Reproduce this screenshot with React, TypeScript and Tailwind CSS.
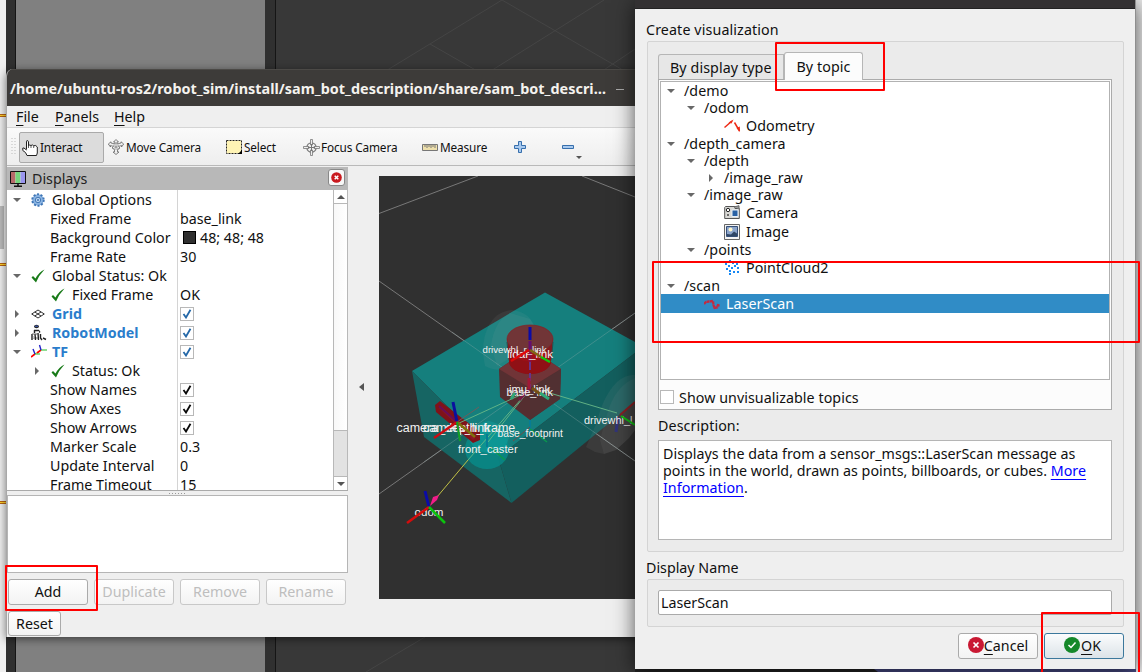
import React from "react";

const Tri = ({ open = true }: { open?: boolean }) => (
  <svg className="h-[8px] w-[8px] shrink-0" viewBox="0 0 8 8">
    <path d={open ? "M0 2H8L4 6Z" : "M2 0V8L6 4Z"} fill="#686868" />
  </svg>
);

const Check = () => (
  <svg className="h-[14px] w-[14px] shrink-0" viewBox="0 0 14 14">
    <path d="M.5 8.500 2 7 4.500 9.500Q8 3 13.500.5 8 6 5 13.500Z" fill="#187a18" />
  </svg>
);

const Box = ({ blue = false }: { blue?: boolean }) => (
  <span className="flex h-[14px] w-[14px] items-center justify-center border border-[#b8b8b8] bg-white">
    <svg className="h-[10px] w-[10px]" viewBox="0 0 10 10">
      <path d="M1.500 5 4 8.500 8.500.8" fill="none" stroke={blue ? "#2468a8" : "#080808"} strokeWidth="1.800" />
    </svg>
  </span>
);

const Gear = () => (
  <svg className="h-[14px] w-[14px]" viewBox="0 0 14 14">
    <circle cx="7" cy="7" r="5.700" fill="#7ba9dc" stroke="#3e75b5" strokeWidth="2" strokeDasharray="2 1.600" />
    <circle cx="7" cy="7" r="4.600" fill="#8cb5e3" />
    <circle cx="7" cy="7" r="2.700" fill="#b7d2ee" stroke="#4379b7" />
    <circle cx="7" cy="7" r="1" fill="#3c71b0" />
  </svg>
);

const GridIcon = () => (
  <svg className="h-[10px] w-[14px]" viewBox="0 0 14 10">
    <path d="M.7 5 7 1 13.300 5 7 9ZM3.800 3 10 7M10 3 3.800 7" fill="none" stroke="#333" strokeWidth="1" />
  </svg>
);

const Robot = () => (
  <svg className="h-[17px] w-[16px]" viewBox="0 0 16 17">
    <ellipse cx="5.500" cy="2.500" rx="2.500" ry="1.800" fill="#222" />
    <path d="M4 2.200H7" stroke="#4668d0" />
    <path d="M3 6.500H7.500L9 8.500M3.500 6V9M1 10V16M4 10 4.500 16M7 9 7.500 16M9.500 10V14L11 16M12 14 15 15.500" fill="none" stroke="#222" strokeWidth="1.400" />
    <path d="M1 10H7M2 14H4M6 13V15" stroke="#666" />
    <path d="M6 7.500H8M2.500 12V14" stroke="#ccc" />
  </svg>
);

const TfIcon = () => (
  <svg className="h-[15px] w-[16px]" viewBox="0 0 16 15">
    <path d="M4 10 10 6" stroke="#dfd21c" />
    <path d="M4 10 0 13M10 6 6 9" stroke="#f00" strokeWidth="1.600" />
    <path d="M4 10H9M10 6H16" stroke="#22bb22" strokeWidth="1.200" />
    <path d="M4 10 2 5M10 6 8.500 1" stroke="#2222c9" strokeWidth="1.400" />
  </svg>
);

const Monitor = () => (
  <svg className="h-[16px] w-[16px]" viewBox="0 0 16 16">
    <path d="M.5.500H15.500V12.500H.5Z" fill="#fff" stroke="#111" />
    <path d="M1 1H5.500V12H1Z" fill="#b66a6a" />
    <path d="M5.500 1H10.500V12H5.500Z" fill="#75d57c" />
    <path d="M10.500 1H15V12H10.500Z" fill="#9a95ee" />
    <path d="M8 12V15M4 15.300H12" stroke="#111" strokeWidth="1.500" />
  </svg>
);

const Hand = () => (
  <svg className="h-[16px] w-[16px]" viewBox="0 0 16 16">
    <path d="M4.500 9.500V1.800Q4.500.5 5.300.5T6.500 1.800V6Q7.500 4.300 9 5.500 10.500 4.300 11.700 5.700 14 4.800 15.300 7V13L14.500 15.500H5L3.500 12.500.8 10.500V8H2L4.500 10" fill="#fff" stroke="#222" />
    <path d="M6.500 5V8M9 5.500V8M11.700 6V8" stroke="#333" strokeWidth=".8" />
  </svg>
);

const MoveIcon = () => (
  <svg className="h-[16px] w-[16px]" viewBox="0 0 16 16">
    <path d="M8 .5 10.500 3H9V5L13 4V2.800L15.700 5 13.500 8V6.500L10.500 7.500 12 9 10 10.500H9.500V13H11L8 15.500 5 13H6.500V10.500L4 9 5.500 7.500 2.500 6.500V8L.3 5 3 2.800V4L7 5V3H5.500Z" fill="#eee" stroke="#666" strokeWidth=".8" />
    <path d="M5 6 11 10M11 6 5 10M8 4V11" stroke="#888" strokeWidth=".7" />
  </svg>
);

const FocusIcon = () => (
  <svg className="h-[17px] w-[17px]" viewBox="0 0 17 17" fill="none" stroke="#777">
    <circle cx="8.500" cy="8.500" r="4.600" strokeWidth="1.300" />
    <path d="M7.500.5H9.500V6H7.500ZM7.500 11H9.500V16.500H7.500ZM.5 7.500H6V9.500H.5ZM11 7.500H16.500V9.500H11Z" fill="#eee" strokeWidth=".8" />
    <path d="M8.500 5V12M5 8.500H12" />
  </svg>
);

const tool = "flex shrink-0 items-center text-[11.800px] tracking-[-0.130px] pt-px";

const menuItems = [["File", "w-[39px]"], ["Panels", "w-[59px]"], ["Help", "w-[60px]"]];

type Row = { label: string; kind?: string; value?: string; open?: boolean; box?: string; strong?: boolean };
const rows: Row[] = [
  { label: "Global Options", kind: "gear", open: true },
  { label: "Fixed Frame", value: "base_link" },
  { label: "Background Color", value: "48; 48; 48", box: "swatch" },
  { label: "Frame Rate", value: "30" },
  { label: "Global Status: Ok", kind: "check", open: true },
  { label: "Fixed Frame", kind: "subcheck", value: "OK" },
  { label: "Grid", kind: "grid", open: false, box: "blue", strong: true },
  { label: "RobotModel", kind: "robot", open: false, box: "blue", strong: true },
  { label: "TF", kind: "tf", open: true, box: "blue", strong: true },
  { label: "Status: Ok", kind: "subcheck", open: false },
  { label: "Show Names", box: "black" },
  { label: "Show Axes", box: "black" },
  { label: "Show Arrows", box: "black" },
  { label: "Marker Scale", value: "0.3" },
  { label: "Update Interval", value: "0" },
  { label: "Frame Timeout", value: "15" },
];

function PropertyRow({ row }: { row: Row }) {
  const sub = row.kind === "subcheck";
  return (
    <div className="flex h-[19px] shrink-0">
      <div className="flex w-[171px] items-center border-r border-[#d4d4d4] whitespace-nowrap">
        {!row.kind ? (
          <span className="ml-[43px]">{row.label}</span>
        ) : (
          <>
            <span className={sub ? "flex w-[44px] pl-[26px]" : "flex w-[24px] pl-[6px]"}>
              {row.open !== undefined && <Tri open={row.open} />}
            </span>
            <span className="flex w-[21px] items-center">
              {row.kind === "gear" && <Gear />}
              {(row.kind === "check" || sub) && <Check />}
              {row.kind === "grid" && <GridIcon />}
              {row.kind === "robot" && <Robot />}
              {row.kind === "tf" && <TfIcon />}
            </span>
            <span className={row.strong ? "font-bold text-[#2a7dcc]" : ""}>{row.label}</span>
          </>
        )}
      </div>
      <div className="flex items-center pl-[2px]">
        {row.box === "swatch" && <span className="mr-[4px] ml-[3px] h-[13px] w-[13px] border border-black bg-[#303030]" />}
        {row.box === "blue" && <Box blue />}
        {row.box === "black" && <Box />}
        {row.value}
      </div>
    </div>
  );
}

const Scene = () => (
  <svg className="h-[423px] w-[256px] shrink-0 bg-[#303030]" viewBox="379 176 256 423">
    <path d="M379 213.500 478 176M582 176 635 197M379 281 635 461M379 494 635 313" stroke="#808080" strokeWidth=".9" />
    <path d="M545 292.500 412 371 498 457 635 353V342Z" fill="#157f7d" />
    <path d="M412 371 424 437 511.500 503 498 457Z" fill="#166563" />
    <path d="M498 457 635 353V402L511.500 503Z" fill="#135f5e" />
    <path d="M485 366Q480 345 488 327 496 311 512 310 530 312 535 328L528 362Q500 375 485 366Z" fill="#b0b0b0" opacity=".08" />
    <path d="M491 345Q495 320 510 313L530 319 538 332 520 352 497 366Z" fill="#b0b0b0" opacity=".08" />
    <path d="M635 375Q626 374 617 382 603 396 597 422L586 447 595 452 604 454 616 450 629 438 635 430Z" fill="#9a9a9a" opacity=".1" />
    <path d="M635 378Q616 386 608 411L600 440 604 454 616 450 629 438 635 430Z" fill="#9a9a9a" opacity=".09" />
    <path d="M452 332 635 461M424 462 635 313" stroke="#9bb1b0" strokeWidth=".7" opacity=".45" />
    <ellipse cx="487" cy="449" rx="22" ry="20" fill="#088c8a" opacity=".8" />
    <path d="M468 438Q474 423 489 421 504 424 509 438L505 448 495 454 476 451Z" fill="#12aaa8" opacity=".4" />
    <path d="M499 369 530 348 561 369 560 399 530 420 500 397Z" fill="#552e30" />
    <path d="M499 369 530 388 561 369 530 348Z" fill="#713437" />
    <path d="M530 388V420L560 399 561 369Z" fill="#513032" />
    <path d="M507 339 509 361A21 13 0 0 0 551 361L553 339Z" fill="#801a1e" />
    <ellipse cx="530" cy="360" rx="21" ry="13" fill="#a01016" />
    <path d="M508 352 509 361A21 13 0 0 0 551 361L552 352Q544 361 530 361T508 352Z" fill="#901015" />
    <ellipse cx="530" cy="339" rx="23" ry="14" fill="#713537" stroke="#861f24" strokeWidth=".7" />
    <path d="M507 342 508 353M553 342 552 353" stroke="#2c4b4b" />
    <path d="M435 405 440 401 480 432 480 440 473 443 436 412Z" fill="#801219" />
    <path d="M440 407 474 439" stroke="#8b1726" strokeWidth="3" />
    <path d="M439 406 456 421" stroke="#670c58" strokeWidth="2" />
    <path d="M529 391 457 424M529 390 468 460M530 389 488 442M543 391 617 413" stroke="#69b988" strokeWidth=".9" fill="none" />
    <path d="M468 460 437 497" stroke="#c0c045" />
    <path d="M530 362V389" stroke="#65338a" strokeWidth="2" strokeDasharray="8 3" />
    <path d="M530 350V362" stroke="#8a0f45" strokeWidth="3" />
    <path d="M530 388 519 400" stroke="#751844" strokeWidth="3" />
    <path d="M529 378V389" stroke="#a11837" strokeWidth="3" />
    <path d="M530 420V432M487 447V434" stroke="#087c94" strokeWidth="2" />
    <path d="M530 427 513 441" stroke="#6e4c49" />
    <path d="M530 429 547 442M490 447 505 460" stroke="#0a984d" strokeWidth="1.500" />
    <path d="M457 422 479 407" stroke="#6c5e5c" />
    <path d="M618 417 616 432" stroke="#31347b" strokeWidth="3" />
    <g fill="#f2f2f2" fontFamily="Liberation Sans, sans-serif" fontSize="11">
      <text x="482.500" y="352.500" fontSize="9.700">drivewhl_r_link</text>
      <text x="507" y="358" fontSize="11.700">lidar_link</text>
      <text x="509" y="393" fontSize="11.200">imu_link</text>
      <text x="506.500" y="396">base_link</text>
      <text x="396.500" y="431.500" fontSize="12.500">camera_depth_frame</text>
      <text x="423" y="431.500" fontSize="12.500">camera_link</text>
      <text x="497.500" y="437" fontSize="10.300">base_footprint</text>
      <text x="458" y="453" fontSize="11.300">front_caster</text>
      <text x="414.500" y="515.500" fontSize="11.600">odom</text>
      <text x="584" y="423.500" fontSize="10.900">drivewhl_l</text>
    </g>
    <path d="M532 388 540 394" stroke="#755016" strokeWidth="3" />
    <path d="M540 393 549 399M511 399 515 393" stroke="#30a878" strokeWidth="3" />
    <path d="M530 350V341" stroke="#650e70" strokeWidth="3" />
    <path d="M530 340V327" stroke="#0b0ba8" strokeWidth="3" />
    <path d="M529 350 511 361" stroke="#e00808" strokeWidth="2.500" />
    <path d="M530 350 541 357" stroke="#806514" strokeWidth="2.500" />
    <path d="M541 357 550 362" stroke="#10c60e" strokeWidth="2.500" />
    <path d="M457 422 453 402" stroke="#0b109f" strokeWidth="3" />
    <path d="M457 422 434 438" stroke="#cb0c11" strokeWidth="2.500" />
    <path d="M457 422 475 437" stroke="#7f700c" strokeWidth="2.500" />
    <path d="M457 422 460 441" stroke="#12a023" strokeWidth="2" />
    <path d="M429 507 425 491" stroke="#0b0ba8" strokeWidth="3" />
    <path d="M429 507 407 523" stroke="#d50c0c" strokeWidth="2.500" />
    <path d="M429 507 445 523" stroke="#0bc40e" strokeWidth="2.500" />
    <path d="M430 506 433 497 439 495 437 500Z" fill="#f21c8a" />
    <path d="M620 415 635 402" stroke="#8c1e22" strokeWidth="2" />
    <path d="M621 416 635 425" stroke="#10bd12" strokeWidth="2" />
  </svg>
);

const button = "flex h-[26px] w-[80px] items-center justify-center rounded-[3px] border bg-linear-to-b from-white to-[#f3f3f3] pb-[2px]";

function RvizWindow() {
  return (
    <section className="absolute top-[69px] left-[6px] flex h-[568px] w-[640px] flex-col overflow-hidden rounded-tl-[7px] border-l border-[#a8a8a8] bg-[#efefef] shadow-[0_2px_10px_#0008]">
      <header className="-ml-px flex h-[37px] shrink-0 items-center border-t border-[#4b4946] bg-[#3d3b39] pl-[4px] text-[14.400px] font-bold tracking-[0.020px] text-[#f4f2ee]">
        <span className="w-[606px] whitespace-nowrap">/home/ubuntu-ros2/robot_sim/install/sam_bot_description/share/sam_bot_descri…</span>
        <span className="mt-[3px] h-px w-[8px] bg-[#aaa]" />
      </header>
      <nav className="flex h-[22px] shrink-0 items-center border-b border-[#d4d4d4] pl-[9px]">
        {menuItems.map(([t, w]) => (
          <span key={t} className={w}><u className="underline-offset-[3px]">{t[0]}</u>{t.slice(1)}</span>
        ))}
      </nav>
      <div className="flex h-[38px] shrink-0 items-center border-b border-[#b9b9b9] bg-linear-to-b from-[#fafafa] to-[#eee] pl-[4px]">
        <svg className="mr-[3px] h-[18px] w-[5px] shrink-0" viewBox="0 0 5 18"><path d="M1 0V18M4 0V18" stroke="#bbb" strokeDasharray="1 2" /></svg>
        <span className={tool + " mt-px mr-px h-[31px] w-[85px] gap-[2px] rounded-[2px] border border-[#aaa] bg-[#dcdcdc] pl-[2px]"}><Hand />Interact</span>
        <span className={tool + " w-[121px] gap-[2px] pl-[3px]"}><MoveIcon />Move Camera</span>
        <span className={tool + " w-[77px] gap-[2px]"}>
          <svg className="h-[14px] w-[16px]" viewBox="0 0 16 14"><path d="M.5.500H15.500V13.500H.5Z" fill="#fff4b5" stroke="#222" strokeDasharray="2 1" /><path d="M12 14 16 10V14Z" /></svg>
          Select
        </span>
        <span className={tool + " w-[119px] gap-px"}><FocusIcon />Focus Camera</span>
        <span className={tool + " w-[92px] gap-[2px]"}>
          <svg className="h-[7px] w-[16px]" viewBox="0 0 16 7"><path d="M.5.500H15.500V6.500H.5Z" fill="#eee0ac" stroke="#777" /><path d="M3 1V3M5 1V4M7 1V3M9 1V4M11 1V3M13 1V4" stroke="#777" /></svg>
          Measure
        </span>
        <svg className="h-[12px] w-[12px] shrink-0" viewBox="0 0 12 12"><path d="M4.500.5H7.500V4.500H11.500V7.500H7.500V11.500H4.500V7.500H.5V4.500H4.500Z" fill="#a9caef" stroke="#376fac" /></svg>
        <svg className="mt-[4px] ml-[36px] h-[20px] w-[21px] shrink-0" viewBox="0 0 21 20"><path d="M.5 6.500H11.500V9.500H.5Z" fill="#a9caef" stroke="#376fac" /><path d="M14 17H20L17 20Z" fill="#555" /></svg>
      </div>
      <div className="flex min-h-0 flex-1">
        <aside className="flex w-[341px] shrink-0 flex-col pt-px">
          <div className="flex h-[23px] shrink-0 items-center bg-[#b8b8b8] pr-[3px] pl-[3px]">
            <Monitor />
            <span className="ml-[6px] flex-1 text-[#222]">Displays</span>
            <span className="mb-[2px] flex h-[17px] w-[17px] items-center justify-center rounded-[3px] border border-[#888] bg-[#f7f7f7]">
              <svg className="h-[11px] w-[11px]" viewBox="0 0 11 11"><circle cx="5.500" cy="5.500" r="5.300" fill="#c9191e" /><path d="M3.700 3.700 7.300 7.300M7.300 3.700 3.700 7.300" stroke="#fff" strokeWidth="1.500" /></svg>
            </span>
          </div>
          <div className="flex h-[301px] shrink-0 border-b border-[#aaa] bg-white">
            <div className="flex w-[326px] flex-col overflow-hidden">
              {rows.map((r, i) => <PropertyRow key={i} row={r} />)}
            </div>
            <div className="flex w-[15px] flex-col border-x border-[#b8b8b8]">
              <span className="flex h-[14px] items-center justify-center border-b border-[#b8b8b8]"><svg className="h-[4px] w-[8px]" viewBox="0 0 8 4"><path d="M0 4H8L4 0Z" fill="#555" /></svg></span>
              <span className="h-[226px] bg-linear-to-r from-[#f8f8f8] to-white" />
              <span className="h-[47px] border-y border-[#b8b8b8] bg-[#e2e2e2]" />
              <span className="flex flex-1 items-center justify-center"><svg className="h-[4px] w-[8px]" viewBox="0 0 8 4"><path d="M0 0H8L4 4Z" fill="#555" /></svg></span>
            </div>
          </div>
          <div className="flex h-[4px] shrink-0 items-center justify-center"><svg className="h-px w-[17px]" viewBox="0 0 17 1"><path d="M0 .5H17" stroke="#999" strokeDasharray="1 2" /></svg></div>
          <div className="h-[78px] shrink-0 border border-[#b5b5b5] bg-white" />
          <div className="mt-[6px] flex shrink-0 gap-[6px] pl-px">
            {["Add", "Duplicate", "Remove", "Rename"].map((t, i) => (
              <button key={t} className={button + (i ? " border-[#c8c8c8] text-[#bebebe]" : " border-[#aaa]")}>{t}</button>
            ))}
          </div>
          <button className="mt-[6px] ml-px flex h-[25px] w-[53px] items-center justify-center rounded-[3px] border border-[#aaa] bg-linear-to-b from-white to-[#f3f3f3]">Reset</button>
        </aside>
        <div className="flex w-[31px] shrink-0 items-center justify-center pr-[4px] pb-[29px]">
          <svg className="h-[8px] w-[5px]" viewBox="0 0 5 8"><path d="M5 0V8L0 4Z" fill="#555" /></svg>
        </div>
        <div className="pt-[10px]"><Scene /></div>
      </div>
    </section>
  );
}

const OdoIcon = () => <svg className="h-[14px] w-[17px]" viewBox="0 0 17 14"><path d="M.5 8.500 8 2M10.500 3.500 15.500 12" stroke="#ed2b16" strokeWidth="1.500" /><path d="M4.500 3.500 9.500.5 7.500 4.500ZM12.500 9 15.800 7.500 16 13Z" fill="#ed2b16" /></svg>;
const CamIcon = () => <svg className="h-[15px] w-[16px]" viewBox="0 0 16 15"><path d="M.7 2.500V13.500H15.300V3.500H11V1.500H1.500Z" fill="#d9d9d6" stroke="#555" /><path d="M10 2 15 .700V4" fill="#999" stroke="#666" /><path d="M8 5H14V11.500H8Z" fill="#2a62a5" stroke="#e9f0f8" /><circle cx="4" cy="5" r="1.700" fill="#fff" stroke="#222" /><circle cx="4" cy="10" r="1" fill="#444" /></svg>;
const ImgIcon = () => <svg className="h-[16px] w-[16px]" viewBox="0 0 16 16"><path d="M.5.500H15.500V15.500H.5Z" fill="#f4f4f4" stroke="#666" /><path d="M2.500 2.500H13.500V12.500H2.500Z" fill="#8ba4ca" stroke="#375077" /><circle cx="6.500" cy="5.500" r="2" fill="#fff6c9" /><path d="M3 12V10L7 10.500 10 7.500 13 9.500V12Z" fill="#304765" /></svg>;
const CloudIcon = () => <svg className="h-[15px] w-[15px]" viewBox="0 0 15 15"><path d="M5 1H7M1 4H3M8 3H10M12 4H14M4 6H6M10 6H12M2 9H4M7 8H9M13 8H15M5 11H7M9 12H11M5 14H7M13 12H15" stroke="#1688f4" strokeWidth="2" /></svg>;
const LaserIcon = () => <svg className="h-[12px] w-[16px]" viewBox="0 0 16 12"><path d="M0 6 2 4 5 3.500 9 3 9.500 7 10.500 10 13 9.500 14 7 16 7.500" fill="none" stroke="#c42a40" strokeWidth="2.300" strokeDasharray="3 .4" /></svg>;

const topics = [
  ["h-[17px] pl-[6px]", "/demo", "open"],
  ["h-[17px] pl-[26px]", "/odom", "open"],
  ["h-[19px] pl-[63px]", "Odometry", "odo"],
  ["h-[17px] pl-[6px]", "/depth_camera", "open"],
  ["h-[17px] pl-[26px]", "/depth", "open"],
  ["h-[17px] pl-[46px]", "/image_raw", "shut"],
  ["h-[17px] pl-[26px]", "/image_raw", "open"],
  ["h-[19px] pl-[63px]", "Camera", "cam"],
  ["h-[19px] pl-[63px]", "Image", "img"],
  ["h-[17px] pl-[26px]", "/points", "open"],
  ["h-[19px] pl-[63px]", "PointCloud2", "cloud"],
  ["h-[17px] pl-[6px]", "/scan", "open"],
  ["h-[19px] pl-[43px] bg-[#308cc6] text-white", "LaserScan", "laser"],
];

function Dialog() {
  return (
    <section className="absolute top-0 left-[635px] flex h-[669px] w-[501px] flex-col border-r border-[#8e8e8e] bg-[#efefef] shadow-[0_3px_20px_#000a]">
      <div className="h-[9px] shrink-0 border-b border-[#222] bg-[#333132]" />
      <div className="flex flex-1 flex-col pr-[11px] pl-[12px]">
        <div className="-ml-px flex h-[32px] items-center pt-[9px] tracking-[0.120px]">Create visualization</div>
        <div className="flex h-[511px] shrink-0 flex-col rounded-[2px] border border-[#d4d4d4] bg-[#ebebeb] pr-[11px] pl-[10px]">
          <div className="flex h-[37px] shrink-0 items-end">
            <span className="flex h-[25px] w-[126px] items-center rounded-tl-[3px] border border-b-0 border-[#b6b6b6] bg-[#e7e7e7] pt-px pl-[11px] tracking-[0.100px] whitespace-nowrap">By display type</span>
            <span className="z-10 -mb-px flex h-[28px] w-[79px] items-center justify-center rounded-t-[3px] border border-b-0 border-[#b6b6b6] bg-[#fcfcfc] tracking-[0.100px]">By topic</span>
          </div>
          <div className="flex h-[331px] shrink-0 flex-col border border-[#ababab] bg-[#fcfcfc] p-px">
            <div className="h-[299px] shrink-0 border border-[#b2b2b2] bg-white tracking-[0.050px]">
              {topics.map(([cls, text, icon], i) => (
                <div key={i} className={"flex items-center " + cls}>
                  {icon === "open" && <span className="mr-[9px] flex"><Tri /></span>}
                  {icon === "shut" && <span className="mr-[9px] flex"><Tri open={false} /></span>}
                  {icon !== "open" && icon !== "shut" && (
                    <span className="flex w-[22px] items-center">
                      {icon === "odo" && <OdoIcon />}
                      {icon === "cam" && <CamIcon />}
                      {icon === "img" && <ImgIcon />}
                      {icon === "cloud" && <CloudIcon />}
                      {icon === "laser" && <LaserIcon />}
                    </span>
                  )}
                  {text}
                </div>
              ))}
            </div>
            <label className="flex flex-1 items-center gap-[5px] pt-[6px] tracking-[0.060px]"><span className="h-[14px] w-[14px] border border-[#b8b8b8] bg-white" />Show unvisualizable topics</label>
          </div>
          <div className="flex h-[30px] shrink-0 items-center pt-px tracking-[0.100px]">Description:</div>
          <div className="h-[100px] shrink-0 border border-[#b5b5b5] bg-white px-[4px] pt-[4px] leading-[17px] tracking-[0.030px] whitespace-nowrap">
            Displays the data from a sensor_msgs::LaserScan message as<br />
            points in the world, drawn as points, billboards, or cubes. <u className="text-[#00f] underline-offset-[3px]">More</u><br />
            <u className="text-[#00f] underline-offset-[3px]">Information</u>.
          </div>
        </div>
        <div className="-ml-px flex h-[27px] shrink-0 items-center pt-[3px]">Display Name</div>
        <div className="h-[48px] shrink-0 rounded-[2px] border border-[#d4d4d4] bg-[#ebebeb] pt-[10px] pr-[11px] pl-[10px]">
          <div className="flex h-[25px] items-center rounded-[2px] border border-[#aaa] bg-white pl-[2px]">LaserScan</div>
        </div>
        <div className="mt-[6px] flex justify-end gap-[6px]">
          <button className={button + " border-[#aaa]"}>
            <svg className="h-[16px] w-[16px]" viewBox="0 0 16 16"><circle cx="8" cy="8" r="8" fill="#c91933" /><path d="M5.500 5.500 10.500 10.500M10.500 5.500 5.500 10.500" stroke="#fff" strokeWidth="1.700" /></svg>
            <span><u className="underline-offset-[3px]">C</u>ancel</span>
          </button>
          <button className="flex h-[26px] w-[80px] items-center justify-center rounded-[3px] border border-[#3c789c] bg-linear-to-b from-[#fbfcfd] to-[#dce3e8] pr-[3px] pb-[2px]">
            <svg className="h-[16px] w-[16px]" viewBox="0 0 16 16"><circle cx="8" cy="8" r="8" fill="#15882a" /><path d="M4.500 8 7 10.500 11.500 5.500" fill="none" stroke="#fff" strokeWidth="1.500" /></svg>
            <span className="ml-px"><u className="underline-offset-[3px]">O</u>K</span>
          </button>
        </div>
      </div>
    </section>
  );
}

export default function App() {
  return (
    <main className="relative flex h-[672px] w-[1142px] overflow-hidden bg-[#383838] font-['Noto_Sans',sans-serif] text-[14.250px] leading-[19px] text-[#101010]">
      <div className="flex w-[6px] flex-col bg-[#f0f0f0]">
        <span className="mt-[114px] h-[3px] border-y border-[#b76512] bg-[#ffd12a]" />
        <span className="mt-[89px] h-[43px] w-[4px] bg-[#bababa]" />
        <span className="mt-[14px] h-[3px] border-y border-[#b76512] bg-[#ffd12a]" />
        <span className="mt-[235px] h-[3px] border-y border-[#b76512] bg-[#ffd12a]" />
      </div>
      <div className="w-[10px] border-r border-[#151515] bg-[#303030]" />
      <div className="w-[249px] bg-[#808080]" />
      <div className="w-[11px] border-r border-[#151515] bg-[#303030]" />
      <svg className="h-[672px] w-[860px]" viewBox="276 0 860 672">
        <path d="M366 83 502 0 635 77M430 44 500 84M470 84 604 0M583 84 635 49M366 672 425 637" fill="none" stroke="#454545" />
        <path d="M635 669H1136V672H635Z" fill="#242424" />
        <path d="M874 669H1136V672H878Z" fill="#4a4c88" />
      </svg>
      <div className="flex-1 bg-[#eee]" />
      <RvizWindow />
      <Dialog />
      <div className="absolute top-[42px] left-[775px] h-[49px] w-[110px] rounded-[1px] border-2 border-[#f00]" />
      <div className="absolute top-[261px] left-[652px] h-[82px] w-[488px] rounded-[1px] border-2 border-[#f00]" />
      <div className="absolute top-[565px] left-[5px] h-[46px] w-[93px] rounded-[1px] border-2 border-[#f00]" />
      <div className="absolute top-[612px] left-[1041px] h-[70px] w-[99px] rounded-[1px] border-2 border-[#f00]" />
    </main>
  );
}
